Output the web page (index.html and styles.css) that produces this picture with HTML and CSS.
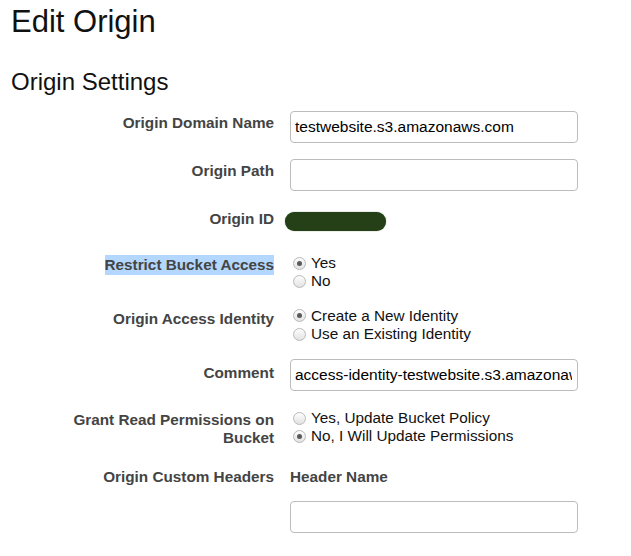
FILE: index.html
```html
<!DOCTYPE html>
<html lang="en">
<head>
    <meta charset="UTF-8">
    <meta name="viewport" content="width=device-width, initial-scale=1.0">
    <title>Edit Origin</title>
    <link rel="stylesheet" href="styles.css">
</head>
<body>
    <div class="page">
        <h1>Edit Origin</h1>
        <h2>Origin Settings</h2>

        <div class="form">
            <div class="row">
                <label class="label">Origin Domain Name</label>
                <div class="field">
                    <input class="text" type="text" value="testwebsite.s3.amazonaws.com">
                </div>
            </div>

            <div class="row">
                <label class="label">Origin Path</label>
                <div class="field">
                    <input class="text" type="text" value="">
                </div>
            </div>

            <div class="row row-id">
                <label class="label">Origin ID</label>
                <div class="field">
                    <span class="redacted"></span>
                </div>
            </div>

            <div class="row">
                <label class="label label-low"><span class="selected">Restrict Bucket Access</span></label>
                <div class="field radios">
                    <label class="choice"><input class="radio" type="radio" name="restrict" checked>Yes</label>
                    <label class="choice"><input class="radio" type="radio" name="restrict">No</label>
                </div>
            </div>

            <div class="row">
                <label class="label">Origin Access Identity</label>
                <div class="field radios">
                    <label class="choice"><input class="radio" type="radio" name="identity" checked>Create a New Identity</label>
                    <label class="choice"><input class="radio" type="radio" name="identity">Use an Existing Identity</label>
                </div>
            </div>

            <div class="row row-comment">
                <label class="label label-comment">Comment</label>
                <div class="field">
                    <input class="text" type="text" value="access-identity-testwebsite.s3.amazonaws.com">
                </div>
            </div>

            <div class="row row-grant">
                <label class="label label-grant">Grant Read Permissions on Bucket</label>
                <div class="field radios">
                    <label class="choice"><input class="radio" type="radio" name="grant">Yes, Update Bucket Policy</label>
                    <label class="choice"><input class="radio" type="radio" name="grant" checked>No, I Will Update Permissions</label>
                </div>
            </div>

            <div class="row">
                <label class="label">Origin Custom Headers</label>
                <div class="field">
                    <div class="subhead">Header Name</div>
                    <input class="text header-input" type="text" value="">
                </div>
            </div>
        </div>
    </div>
</body>
</html>
```

FILE: styles.css
```css
body {
    margin: 0;
    font-family: "Liberation Sans", Arial, Helvetica, sans-serif;
    color: #000;
    background: #fff;
}
.page {
    padding: 4px 0 0 11px;
}
h1 {
    margin: 0;
    font-size: 31px;
    line-height: 36px;
    font-weight: normal;
    color: #111;
}
h2 {
    margin: 28px 0 0;
    font-size: 24px;
    line-height: 28px;
    font-weight: normal;
    color: #111;
}
.form {
    margin-top: 15px;
}
.row {
    display: flex;
    margin-bottom: 16px;
}
.row-id {
    height: 32px;
    margin-bottom: 15px;
}
.row-comment {
    margin-bottom: 18px;
}
.row-grant {
    margin-bottom: 17px;
}
.label {
    flex: 0 0 205px;
    margin: 0 16px 0 58px;
    padding-top: 3px;
    text-align: right;
    font-size: 15.3px;
    line-height: 18.3px;
    font-weight: bold;
    color: #444;
}
.label-low {
    padding-top: 1px;
}
.label-comment {
    padding-top: 5px;
}
.label-grant {
    padding-top: 2px;
}
.selected {
    display: inline-block;
    line-height: 20px;
    background: #b3d7fe;
}
.field {
    width: 288px;
}
.text {
    display: block;
    box-sizing: border-box;
    width: 288px;
    height: 32px;
    margin: 0;
    padding: 0 5px 0 4px;
    border: 1px solid #bcbcbc;
    border-radius: 4px;
    font-family: "Liberation Sans", Arial, sans-serif;
    font-size: 15.5px;
    color: #000;
    background: #fff;
    outline: none;
}
.redacted {
    display: block;
    width: 101px;
    height: 19px;
    margin: 5px 0 0 -5px;
    border-radius: 10px;
    background: #253f17;
    box-shadow: 0 0 1px #3b5a2a;
}
.radios {
    display: flex;
    flex-direction: column;
}
.choice {
    display: flex;
    align-items: center;
    height: 18.3px;
    font-size: 15.3px;
    line-height: 18.3px;
    color: #111;
}
.radio {
    appearance: none;
    -webkit-appearance: none;
    box-sizing: border-box;
    width: 13px;
    height: 13px;
    margin: 0 5px 0 3px;
    border: 1px solid #b9b9b9;
    border-radius: 50%;
    background: linear-gradient(#fdfdfd, #e2e2e2);
    position: relative;
}
.radio:checked::after {
    content: "";
    position: absolute;
    left: 3px;
    top: 3px;
    width: 5px;
    height: 5px;
    border-radius: 50%;
    background: #5a5a5a;
}
.subhead {
    padding-top: 3px;
    font-size: 15.3px;
    line-height: 18.3px;
    font-weight: bold;
    color: #444;
}
.header-input {
    margin-top: 15px;
}
```
